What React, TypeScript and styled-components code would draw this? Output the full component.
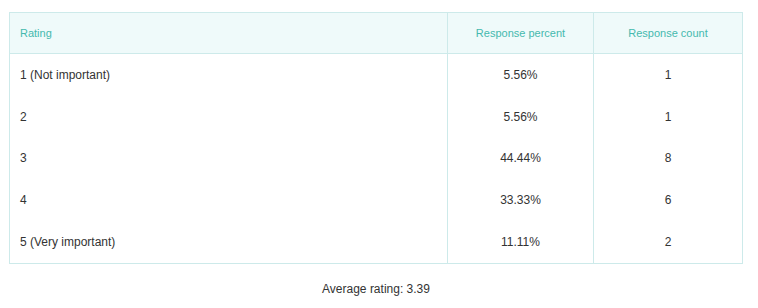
import React, { FC } from 'react'
import styled, { createGlobalStyle } from 'styled-components'

const GlobalStyle = createGlobalStyle`
  body {
    margin: 0;
    background: #fff;
    font-family: 'Liberation Sans', Arial, sans-serif;
  }
`

const Wrapper = styled.div`
  padding: 12px 15px 0 9px;
`

const Table = styled.table`
  width: 734px;
  border-collapse: collapse;
  table-layout: fixed;
  border: 1px solid #cdeaea;
`

const HeadCell = styled.th<{ $align?: string; $width?: number }>`
  box-sizing: border-box;
  height: 41px;
  padding: 0 10px;
  background: #effafa;
  color: #45b9ae;
  font-size: 11px;
  font-weight: normal;
  text-align: ${(props) => props.$align || 'center'};
  border-bottom: 1px solid #cdeaea;
  border-left: 1px solid #cdeaea;
  width: ${(props) => (props.$width ? `${props.$width}px` : 'auto')};
`

const Cell = styled.td<{ $align?: string }>`
  height: 41.8px;
  padding: 0 10px;
  color: #333;
  font-size: 12px;
  text-align: ${(props) => props.$align || 'center'};
  border-left: 1px solid #cdeaea;
`

const Average = styled.div`
  width: 734px;
  margin-top: 18px;
  text-align: center;
  font-size: 12px;
  color: #333;
`

const rows = [
  { rating: '1 (Not important)', percent: '5.56%', count: 1 },
  { rating: '2', percent: '5.56%', count: 1 },
  { rating: '3', percent: '44.44%', count: 8 },
  { rating: '4', percent: '33.33%', count: 6 },
  { rating: '5 (Very important)', percent: '11.11%', count: 2 },
]

const App: FC = () => {
  return (
    <Wrapper>
      <GlobalStyle />
      <Table>
        <thead>
          <tr>
            <HeadCell $align="left">Rating</HeadCell>
            <HeadCell $width={146}>Response percent</HeadCell>
            <HeadCell $width={149}>Response count</HeadCell>
          </tr>
        </thead>
        <tbody>
          {rows.map((row) => (
            <tr key={row.rating}>
              <Cell $align="left">{row.rating}</Cell>
              <Cell>{row.percent}</Cell>
              <Cell>{row.count}</Cell>
            </tr>
          ))}
        </tbody>
      </Table>
      <Average>Average rating: 3.39</Average>
    </Wrapper>
  )
}

export default App
